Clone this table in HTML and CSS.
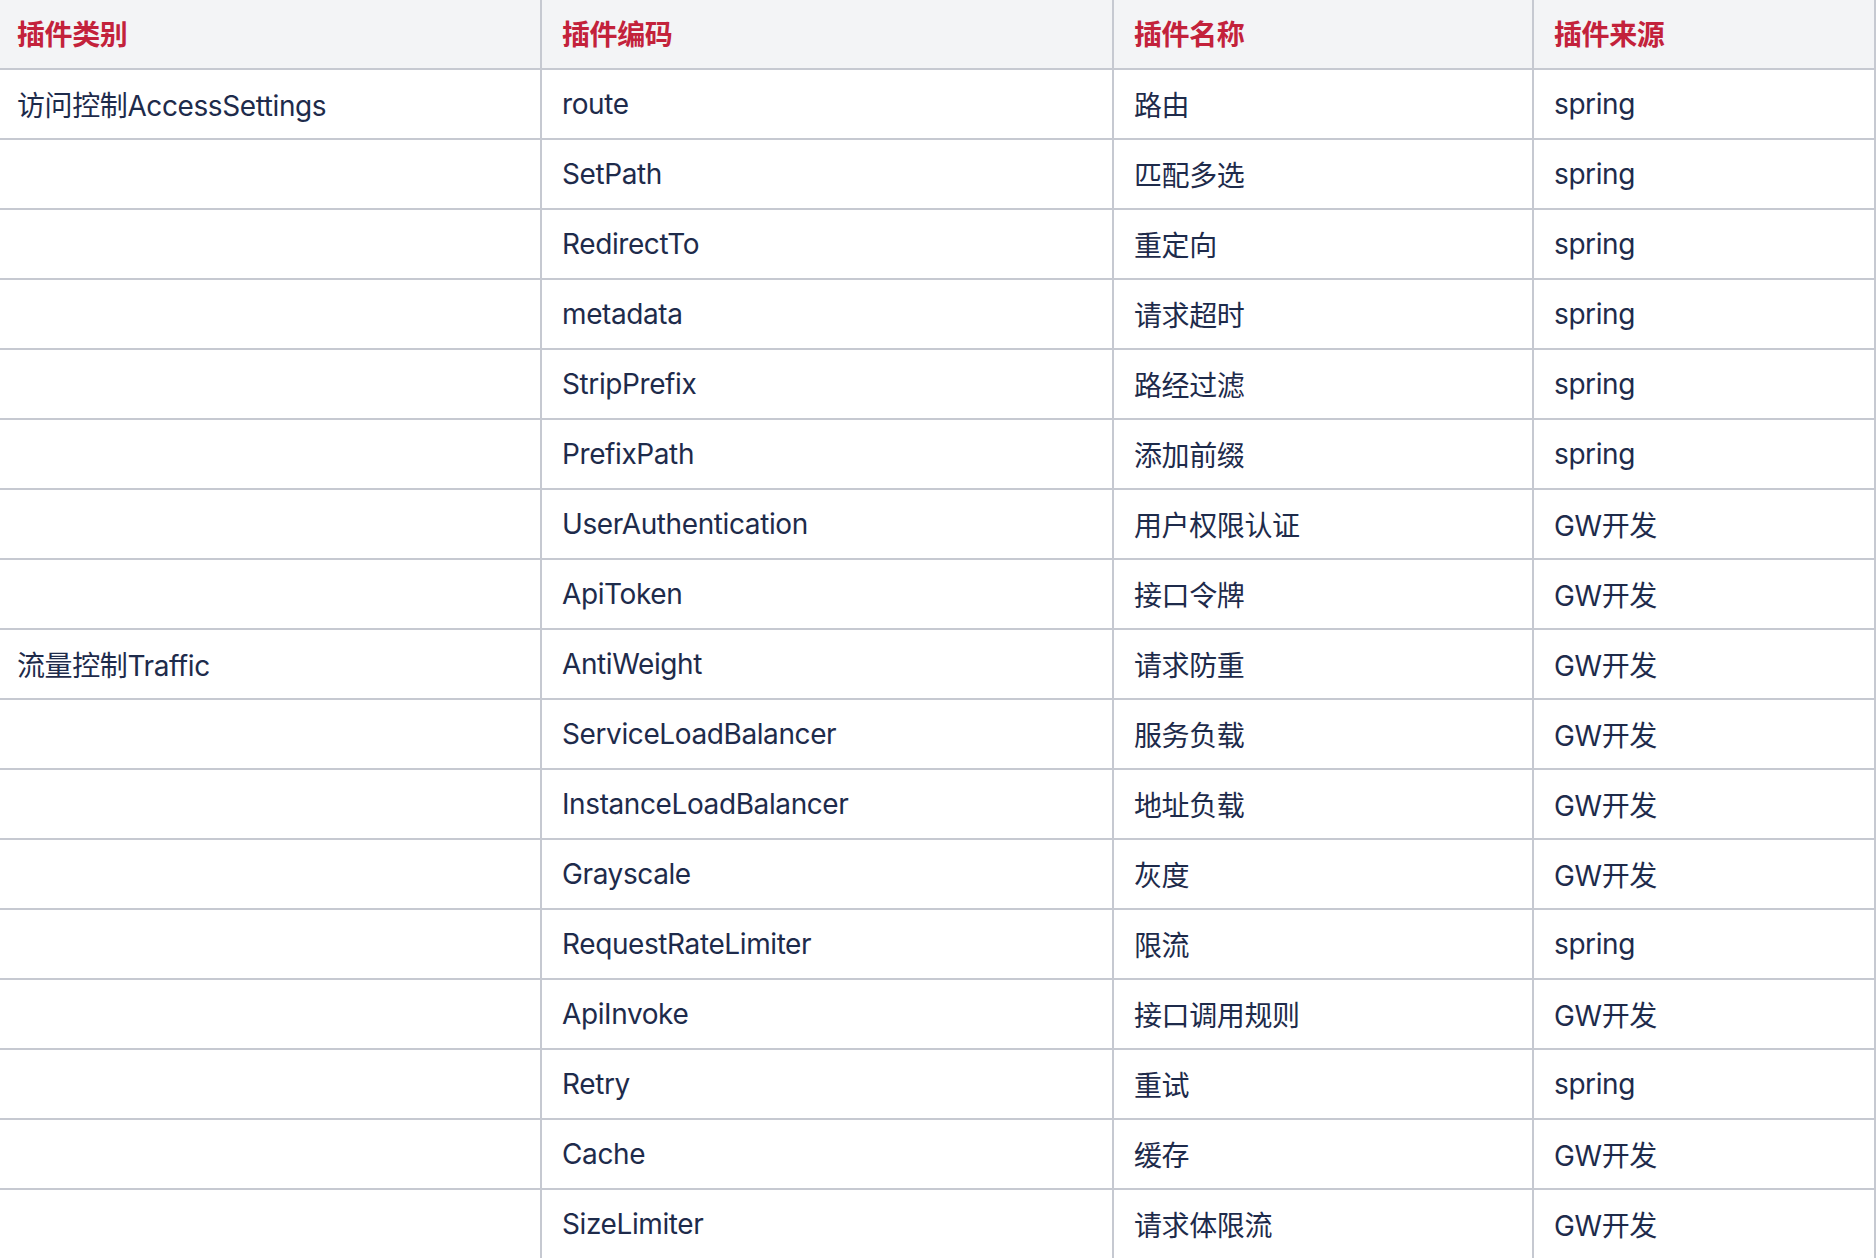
FILE: index.html
```html
<!DOCTYPE html>
<html lang="zh-CN">
<head>
<meta charset="utf-8">
<title>插件列表</title>
<link rel="stylesheet" href="styles.css">
</head>
<body>
<table class="plugins">
  <colgroup>
    <col class="c1"><col class="c2"><col class="c3"><col class="c4">
  </colgroup>
  <thead>
    <tr><th>插件类别</th><th>插件编码</th><th>插件名称</th><th>插件来源</th></tr>
  </thead>
  <tbody>
    <tr><td>访问控制AccessSettings</td><td>route</td><td>路由</td><td>spring</td></tr>
    <tr><td></td><td>SetPath</td><td>匹配多选</td><td>spring</td></tr>
    <tr><td></td><td>RedirectTo</td><td>重定向</td><td>spring</td></tr>
    <tr><td></td><td>metadata</td><td>请求超时</td><td>spring</td></tr>
    <tr><td></td><td>StripPrefix</td><td>路经过滤</td><td>spring</td></tr>
    <tr><td></td><td>PrefixPath</td><td>添加前缀</td><td>spring</td></tr>
    <tr><td></td><td>UserAuthentication</td><td>用户权限认证</td><td>GW开发</td></tr>
    <tr><td></td><td>ApiToken</td><td>接口令牌</td><td>GW开发</td></tr>
    <tr><td>流量控制Traffic</td><td>AntiWeight</td><td>请求防重</td><td>GW开发</td></tr>
    <tr><td></td><td>ServiceLoadBalancer</td><td>服务负载</td><td>GW开发</td></tr>
    <tr><td></td><td>InstanceLoadBalancer</td><td>地址负载</td><td>GW开发</td></tr>
    <tr><td></td><td>Grayscale</td><td>灰度</td><td>GW开发</td></tr>
    <tr><td></td><td>RequestRateLimiter</td><td>限流</td><td>spring</td></tr>
    <tr><td></td><td>ApiInvoke</td><td>接口调用规则</td><td>GW开发</td></tr>
    <tr><td></td><td>Retry</td><td>重试</td><td>spring</td></tr>
    <tr><td></td><td>Cache</td><td>缓存</td><td>GW开发</td></tr>
    <tr><td></td><td>SizeLimiter</td><td>请求体限流</td><td>GW开发</td></tr>
  </tbody>
</table>
</body>
</html>
```
FILE: styles.css
```css
html, body {
  margin: 0;
  padding: 0;
  background: #ffffff;
  overflow: hidden;
}

.plugins {
  margin-left: -3px;
  width: 1879px;
  table-layout: fixed;
  border-collapse: separate;
  border-spacing: 0;
  font-family: Inter, "Noto Sans CJK SC", sans-serif;
  font-size: 28px;
  letter-spacing: -0.4px;
  color: #1e2b4b;
}

.c1 { width: 545px; }
.c2 { width: 572px; }
.c3 { width: 420px; }
.c4 { width: 342px; }

.plugins th,
.plugins td {
  box-sizing: border-box;
  height: 70px;
  padding: 0 20px;
  text-align: left;
  vertical-align: middle;
  border-right: 2px solid #c6c9d1;
  border-bottom: 2px solid #c6c9d1;
  white-space: nowrap;
}

.plugins th {
  background: #f3f4f6;
  color: #c3223b;
  font-weight: 700;
  padding-bottom: 3px;
}
```
